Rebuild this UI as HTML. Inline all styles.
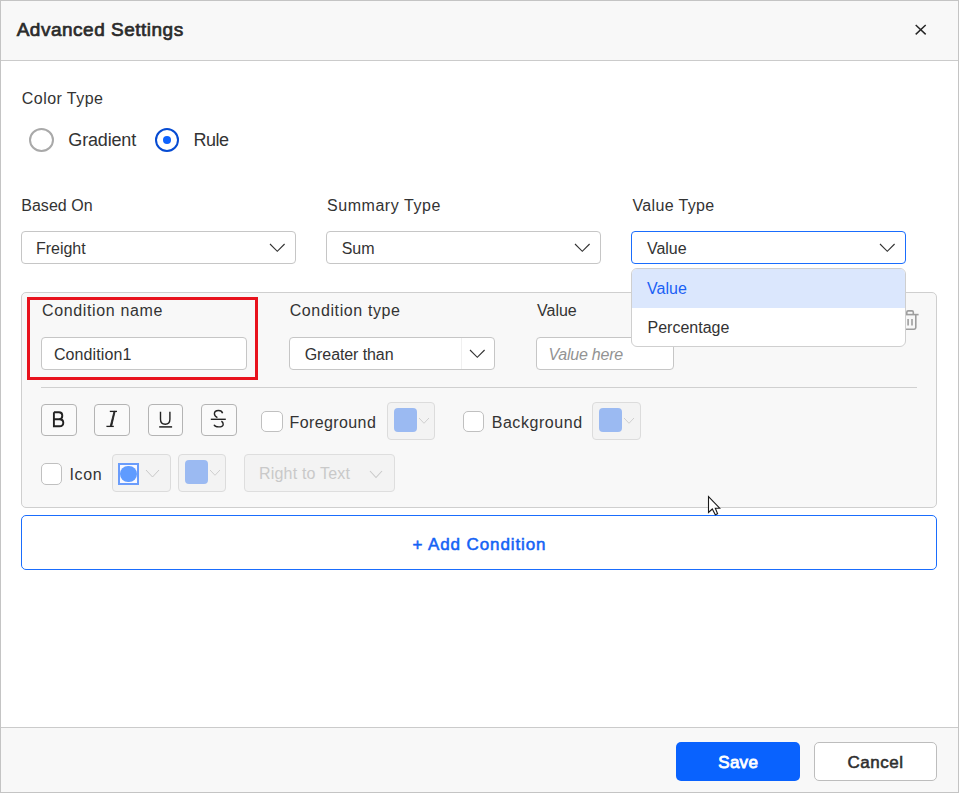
<!DOCTYPE html>
<html><head><meta charset="utf-8"><style>
html,body{margin:0;padding:0;width:959px;height:793px;overflow:hidden;background:#fff;}
.b{position:absolute;box-sizing:border-box;}
.t{position:absolute;white-space:nowrap;}
</style></head><body>
<div class='b' style='left:0px;top:0px;width:959px;height:793px;background:#ffffff;border-radius:0px;border:1px solid #c4c4c4;'></div>
<div class='b' style='left:1px;top:1px;width:957px;height:59px;background:#f8f8f8;border-radius:0px;'></div>
<div class='b' style='left:1px;top:60px;width:957px;height:1px;background:#cbcbcb;border-radius:0px;'></div>
<div class='b' style='left:1px;top:727px;width:957px;height:1px;background:#cbcbcb;border-radius:0px;'></div>
<div class='b' style='left:1px;top:728px;width:957px;height:64px;background:#f8f8f8;border-radius:0px;'></div>
<svg class='b' style='left:913px;top:22px' width='16' height='16' viewBox='0 0 16 16'><path d='M2.7 3 L12.7 12.4 M12.7 3 L2.7 12.4' stroke='#262626' stroke-width='1.45' fill='none'/></svg>
<div class='b' style='left:29px;top:128px;width:25px;height:24px;background:#fff;border-radius:50%;border:2px solid #a9a9a9;box-sizing:border-box;'></div>
<div class='b' style='left:155px;top:128px;width:24px;height:24px;background:#fff;border-radius:12px;border:2px solid #064bd2;box-sizing:border-box;'></div>
<div class='b' style='left:163px;top:136px;width:8px;height:8px;background:#0d62fe;border-radius:4px;'></div>
<div class='b' style='left:21px;top:231px;width:275px;height:33px;background:#fff;border-radius:4px;border:1px solid #c6c6c6;box-sizing:border-box;'></div>
<svg class='b' style='left:268.4px;top:241.95px' width='18.6' height='11.3' viewBox='0 0 18.6 11.3'><polyline points='2,2 9.3,9.3 16.6,2' fill='none' stroke='#333' stroke-width='1.15'/></svg>
<div class='b' style='left:326px;top:231px;width:275px;height:33px;background:#fff;border-radius:4px;border:1px solid #c6c6c6;box-sizing:border-box;'></div>
<svg class='b' style='left:573.4000000000001px;top:241.95px' width='18.6' height='11.3' viewBox='0 0 18.6 11.3'><polyline points='2,2 9.3,9.3 16.6,2' fill='none' stroke='#333' stroke-width='1.15'/></svg>
<div class='b' style='left:631px;top:231px;width:275px;height:33px;background:#fff;border-radius:4px;border:1px solid #1a6dfd;box-sizing:border-box;'></div>
<svg class='b' style='left:878.4000000000001px;top:241.95px' width='18.6' height='11.3' viewBox='0 0 18.6 11.3'><polyline points='2,2 9.3,9.3 16.6,2' fill='none' stroke='#333' stroke-width='1.15'/></svg>
<div class='b' style='left:21px;top:292px;width:916px;height:216px;background:#f8f8f8;border-radius:5px;border:1px solid #cfcfcf;box-sizing:border-box;'></div>
<div class='b' style='left:27px;top:297px;width:231px;height:83px;background:transparent;border-radius:0px;border:3px solid #e8121d;box-sizing:border-box;'></div>
<div class='b' style='left:41px;top:337px;width:206px;height:33px;background:#fff;border-radius:4px;border:1px solid #c6c6c6;box-sizing:border-box;'></div>
<div class='b' style='left:289px;top:337px;width:206px;height:33px;background:#fff;border-radius:4px;border:1px solid #c6c6c6;box-sizing:border-box;'></div>
<div class='b' style='left:461px;top:338px;width:1px;height:31px;background:#f0f0f0;border-radius:0px;'></div>
<svg class='b' style='left:467.7px;top:347.85px' width='18.6' height='11.3' viewBox='0 0 18.6 11.3'><polyline points='2,2 9.3,9.3 16.6,2' fill='none' stroke='#333' stroke-width='1.15'/></svg>
<div class='b' style='left:536px;top:337px;width:138px;height:33px;background:#fff;border-radius:4px;border:1px solid #c6c6c6;box-sizing:border-box;'></div>
<svg class='b' style='left:900px;top:308px' width='22' height='24' viewBox='0 0 22 24'><path d='M6.8 6 V4.2 Q6.8 2.9 8.1 2.9 H12 Q13.3 2.9 13.3 4.2 V6' fill='none' stroke='#9e9e9e' stroke-width='1.6'/><path d='M1.5 6.6 H18.6' stroke='#9e9e9e' stroke-width='1.6'/><path d='M4.4 7 V19.6 Q4.4 21.2 6 21.2 H14.2 Q15.8 21.2 15.8 19.6 V7' fill='none' stroke='#9e9e9e' stroke-width='1.6'/><path d='M8.1 11 V17.5 M12 11 V17.5' stroke='#9e9e9e' stroke-width='1.6'/></svg>
<div class='b' style='left:41px;top:387px;width:876px;height:1px;background:#d0d0d0;border-radius:0px;'></div>
<div class='b' style='left:41px;top:404px;width:36px;height:32px;background:#fafafa;border-radius:4px;border:1px solid #b4b4b4;box-sizing:border-box;'></div>
<div class='b' style='left:94px;top:404px;width:36px;height:32px;background:#fafafa;border-radius:4px;border:1px solid #b4b4b4;box-sizing:border-box;'></div>
<div class='b' style='left:148px;top:404px;width:35px;height:32px;background:#fafafa;border-radius:4px;border:1px solid #b4b4b4;box-sizing:border-box;'></div>
<div class='b' style='left:201px;top:404px;width:36px;height:32px;background:#fafafa;border-radius:4px;border:1px solid #b4b4b4;box-sizing:border-box;'></div>
<svg class='b' style='left:52px;top:410px' width='16' height='19' viewBox='0 0 16 19'><path d='M1.9 2.2 V16.2 H7.4 C9.9 16.2 11.3 14.9 11.3 12.7 C11.3 10.5 9.9 9.2 7.4 9.2 H1.9 M7 9.2 C9.2 9.2 10.3 8 10.3 5.7 C10.3 3.4 9.2 2.2 7 2.2 H1.9' fill='none' stroke='#222' stroke-width='1.9'/></svg>
<svg class='b' style='left:104px;top:409px' width='16' height='20' viewBox='0 0 16 20'><path d='M5.8 2.4 H13' stroke='#222' stroke-width='1.3'/><path d='M2.4 17.4 H9.8' stroke='#222' stroke-width='1.3'/><path d='M11.1 2.4 L10 2.4 L6.2 17.4 L7.6 17.4 Z' fill='#222' stroke='#222' stroke-width='0.9' stroke-linejoin='round'/></svg>
<svg class='b' style='left:158px;top:410px' width='16' height='19' viewBox='0 0 16 19'><path d='M2.5 1.8 V9.3 C2.5 12.4 4.3 14.2 7.2 14.2 C10.1 14.2 11.9 12.4 11.9 9.3 V1.8' fill='none' stroke='#222' stroke-width='1.4'/><path d='M1.2 16.9 H14.1' stroke='#222' stroke-width='1.5'/></svg>
<svg class='b' style='left:209px;top:408px' width='19' height='21' viewBox='0 0 19 21'><path d='M13.6 5.2 C13 3.3 11.4 2.5 9.5 2.5 C7 2.5 5.4 3.9 5.4 5.8 C5.4 7.6 6.6 8.7 8.4 9.6' fill='none' stroke='#222' stroke-width='1.4'/><path d='M1.8 11.3 H16.8' stroke='#222' stroke-width='1.4'/><path d='M12.4 13.1 C13.6 13.9 14.2 14.9 14.2 16.2 C14.2 17.9 12.5 18.9 9.6 18.9 C7.4 18.9 5.7 18.1 5 16.7' fill='none' stroke='#222' stroke-width='1.4'/></svg>
<div class='b' style='left:261px;top:411px;width:22px;height:21px;background:#fff;border-radius:5px;border:1px solid #c0c0c0;box-sizing:border-box;'></div>
<div class='b' style='left:463px;top:411px;width:21px;height:21px;background:#fff;border-radius:5px;border:1px solid #c0c0c0;box-sizing:border-box;'></div>
<div class='b' style='left:41px;top:463px;width:21px;height:22px;background:#fff;border-radius:5px;border:1px solid #c0c0c0;box-sizing:border-box;'></div>
<div class='b' style='left:387px;top:402px;width:48px;height:38px;background:#f3f3f3;border-radius:4px;border:1px solid #dcdcdc;box-sizing:border-box;'></div>
<div class='b' style='left:394px;top:408px;width:23px;height:24px;background:#9bbaf2;border-radius:4px;'></div>
<svg class='b' style='left:416.7px;top:416.35px' width='14' height='9.3' viewBox='0 0 14 9.3'><polyline points='2,2 7.0,7.3 12,2' fill='none' stroke='#cfcfcf' stroke-width='1'/></svg>
<div class='b' style='left:592px;top:402px;width:49px;height:38px;background:#f3f3f3;border-radius:4px;border:1px solid #dcdcdc;box-sizing:border-box;'></div>
<div class='b' style='left:599px;top:408px;width:23px;height:24px;background:#9bbaf2;border-radius:4px;'></div>
<svg class='b' style='left:621.7px;top:416.35px' width='14' height='9.3' viewBox='0 0 14 9.3'><polyline points='2,2 7.0,7.3 12,2' fill='none' stroke='#cfcfcf' stroke-width='1'/></svg>
<div class='b' style='left:178px;top:454px;width:48px;height:38px;background:#f3f3f3;border-radius:4px;border:1px solid #dcdcdc;box-sizing:border-box;'></div>
<div class='b' style='left:185px;top:460px;width:23px;height:24px;background:#9bbaf2;border-radius:4px;'></div>
<svg class='b' style='left:207.7px;top:468.35px' width='14' height='9.3' viewBox='0 0 14 9.3'><polyline points='2,2 7.0,7.3 12,2' fill='none' stroke='#cfcfcf' stroke-width='1'/></svg>
<div class='b' style='left:112px;top:454px;width:59px;height:38px;background:#f3f3f3;border-radius:4px;border:1px solid #dcdcdc;box-sizing:border-box;'></div>
<div class='b' style='left:118px;top:463px;width:21px;height:22px;background:#f8f8ff;border-radius:0px;border:2px solid #6a9cfb;box-sizing:border-box;'></div>
<div class='b' style='left:120px;top:465.5px;width:16.8px;height:16.8px;border-radius:50%;background:#5f9bff'></div>
<svg class='b' style='left:143.5px;top:468.1px' width='17' height='11' viewBox='0 0 17 11'><polyline points='2,2 8.5,9 15,2' fill='none' stroke='#c9c9c9' stroke-width='1'/></svg>
<div class='b' style='left:244px;top:454px;width:151px;height:38px;background:#f3f3f3;border-radius:4px;border:1px solid #dedede;box-sizing:border-box;'></div>
<svg class='b' style='left:368.0px;top:468.75px' width='16' height='10.5' viewBox='0 0 16 10.5'><polyline points='2,2 8.0,8.5 14,2' fill='none' stroke='#c9c9c9' stroke-width='1.1'/></svg>
<div class='b' style='left:21px;top:515px;width:916px;height:55px;background:#fff;border-radius:5px;border:1px solid #1a6dfd;box-sizing:border-box;'></div>
<div class='b' style='left:631px;top:268px;width:275px;height:79px;background:#fff;border-radius:6px;border:1px solid #cfcfcf;box-sizing:border-box;overflow:hidden;'></div>
<div class='b' style='left:632px;top:269px;width:273px;height:39px;background:#dbe7fd;border-radius:5px;border-bottom-left-radius:0;border-bottom-right-radius:0;'></div>
<div class='b' style='left:676px;top:742px;width:124px;height:39px;background:#0962fe;border-radius:5px;'></div>
<div class='b' style='left:814px;top:742px;width:123px;height:39px;background:#fff;border-radius:5px;border:1px solid #bdbdbd;box-sizing:border-box;'></div>
<div class='t' style='left:16.70px;top:20px;font:normal 400 19px/19px "Liberation Sans",sans-serif;color:#2b2b2b;letter-spacing:0.500px;-webkit-text-stroke:0.7px #2b2b2b;'>Advanced Settings</div>
<div class='t' style='left:21.80px;top:91px;font:normal 400 16px/16px "Liberation Sans",sans-serif;color:#333333;letter-spacing:0.444px;'>Color Type</div>
<div class='t' style='left:68.30px;top:131px;font:normal 400 18px/18px "Liberation Sans",sans-serif;color:#333333;letter-spacing:-0.171px;'>Gradient</div>
<div class='t' style='left:193.50px;top:131px;font:normal 400 18px/18px "Liberation Sans",sans-serif;color:#333333;letter-spacing:-0.533px;'>Rule</div>
<div class='t' style='left:21.20px;top:198px;font:normal 400 16px/16px "Liberation Sans",sans-serif;color:#333333;letter-spacing:0.043px;'>Based On</div>
<div class='t' style='left:327.00px;top:198px;font:normal 400 16px/16px "Liberation Sans",sans-serif;color:#333333;letter-spacing:0.545px;'>Summary Type</div>
<div class='t' style='left:632.40px;top:198px;font:normal 400 16px/16px "Liberation Sans",sans-serif;color:#333333;letter-spacing:0.367px;'>Value Type</div>
<div class='t' style='left:35.90px;top:241px;font:normal 400 16px/16px "Liberation Sans",sans-serif;color:#333333;letter-spacing:0.000px;'>Freight</div>
<div class='t' style='left:341.70px;top:241px;font:normal 400 16px/16px "Liberation Sans",sans-serif;color:#333333;letter-spacing:0.000px;'>Sum</div>
<div class='t' style='left:646.90px;top:241px;font:normal 400 16px/16px "Liberation Sans",sans-serif;color:#333333;letter-spacing:0.000px;'>Value</div>
<div class='t' style='left:42.00px;top:303px;font:normal 400 16px/16px "Liberation Sans",sans-serif;color:#333333;letter-spacing:0.638px;'>Condition name</div>
<div class='t' style='left:289.70px;top:303px;font:normal 400 16px/16px "Liberation Sans",sans-serif;color:#333333;letter-spacing:0.615px;'>Condition type</div>
<div class='t' style='left:537.00px;top:303px;font:normal 400 16px/16px "Liberation Sans",sans-serif;color:#333333;letter-spacing:0.000px;'>Value</div>
<div class='t' style='left:53.90px;top:347px;font:normal 400 16px/16px "Liberation Sans",sans-serif;color:#333333;letter-spacing:0.111px;'>Condition1</div>
<div class='t' style='left:304.75px;top:347px;font:normal 400 16px/16px "Liberation Sans",sans-serif;color:#333333;letter-spacing:-0.091px;'>Greater than</div>
<div class='t' style='left:548.40px;top:347px;font:italic 400 16px/16px "Liberation Sans",sans-serif;color:#939393;letter-spacing:-0.222px;'>Value here</div>
<div class='t' style='left:647.10px;top:281px;font:normal 400 16px/16px "Liberation Sans",sans-serif;color:#1a5ff5;letter-spacing:0.000px;'>Value</div>
<div class='t' style='left:647.50px;top:320px;font:normal 400 16px/16px "Liberation Sans",sans-serif;color:#333333;letter-spacing:0.000px;'>Percentage</div>
<div class='t' style='left:289.50px;top:415px;font:normal 400 16px/16px "Liberation Sans",sans-serif;color:#333333;letter-spacing:0.400px;'>Foreground</div>
<div class='t' style='left:491.70px;top:415px;font:normal 400 16px/16px "Liberation Sans",sans-serif;color:#333333;letter-spacing:0.556px;'>Background</div>
<div class='t' style='left:69.50px;top:467px;font:normal 400 16px/16px "Liberation Sans",sans-serif;color:#333333;letter-spacing:0.600px;'>Icon</div>
<div class='t' style='left:259.00px;top:466px;font:normal 400 16px/16px "Liberation Sans",sans-serif;color:#c9c9c9;letter-spacing:0.192px;'>Right to Text</div>
<div class='t' style='left:412.50px;top:536px;font:normal 400 17px/17px "Liberation Sans",sans-serif;color:#1463f5;letter-spacing:0.893px;-webkit-text-stroke:0.55px #1463f5;'>+ Add Condition</div>
<div class='t' style='left:718.30px;top:754px;font:normal 400 17px/17px "Liberation Sans",sans-serif;color:#ffffff;letter-spacing:0.267px;-webkit-text-stroke:0.8px #ffffff;'>Save</div>
<div class='t' style='left:847.50px;top:754px;font:normal 400 17px/17px "Liberation Sans",sans-serif;color:#2e2e2e;letter-spacing:0.540px;-webkit-text-stroke:0.55px #2e2e2e;'>Cancel</div>
<svg class='b' style='left:706px;top:494px' width='18' height='24' viewBox='0 0 18 24'><path d='M2.5 2.5 L2.5 18.5 L6.3 15 L9.3 20.8 L11.6 19.8 L9.3 14.2 L13.7 14.2 Z' fill='#fff' stroke='#1a1a1a' stroke-width='1.1' stroke-linejoin='miter'/></svg>
</body></html>
